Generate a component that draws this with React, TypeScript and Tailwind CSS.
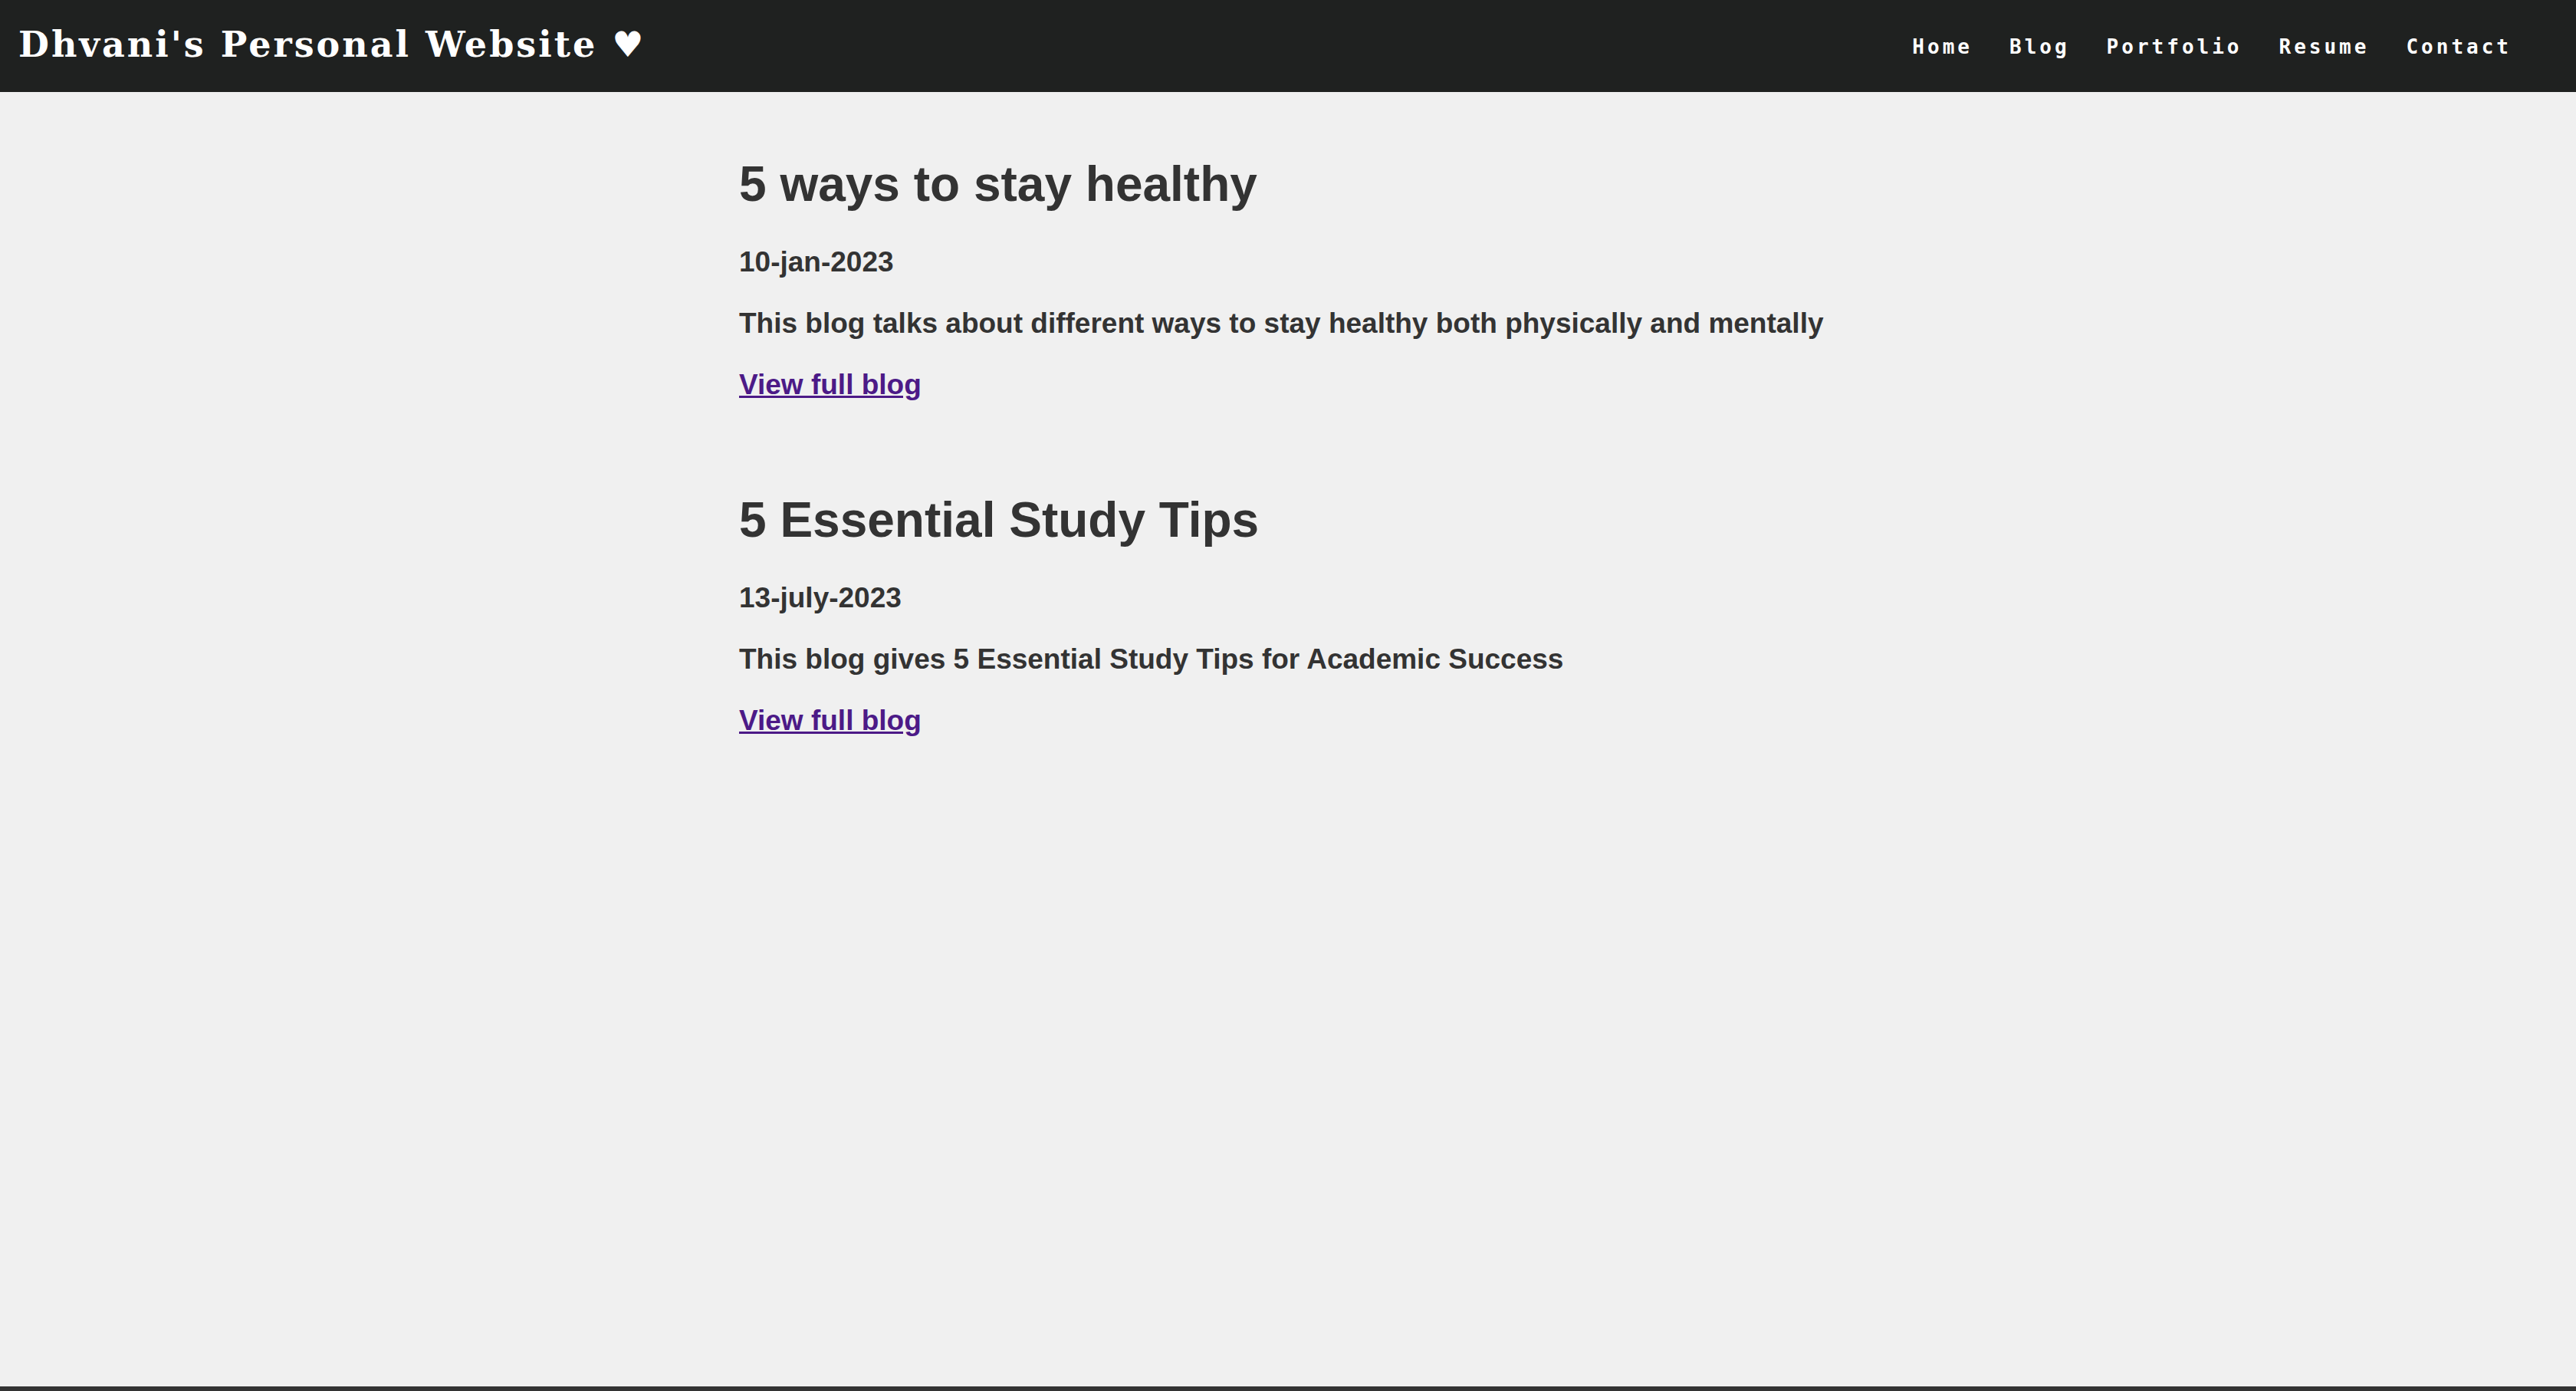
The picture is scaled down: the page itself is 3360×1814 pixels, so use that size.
const links = ["Home", "Blog", "Portfolio", "Resume", "Contact"];

const posts = [
  {
    title: "5 ways to stay healthy",
    date: "10-jan-2023",
    summary: "This blog talks about different ways to stay healthy both physically and mentally",
  },
  {
    title: "5 Essential Study Tips",
    date: "13-july-2023",
    summary: "This blog gives 5 Essential Study Tips for Academic Success",
  },
];

function Header() {
  return (
    <header className="flex h-30 items-center justify-between bg-[#1f2120] pl-6 pr-[84px] text-white">
      <div className="pb-1 font-['DejaVu_Serif',serif] text-[46px] leading-[60px] font-bold tracking-[3px]">
        Dhvani's Personal Website <span className="font-['DejaVu_Sans',sans-serif]">♥</span>
      </div>
      <nav className="flex gap-12 pt-0.5 font-['DejaVu_Sans_Mono',monospace] text-[26px] leading-8 font-bold tracking-[4px]">
        {links.map((label) => (
          <a key={label} href="#">
            {label}
          </a>
        ))}
      </nav>
    </header>
  );
}

export default function App() {
  return (
    <div className="flex min-h-screen flex-col bg-[#f0f0f0] font-['Liberation_Sans',Arial,sans-serif] font-bold text-[#333]">
      <Header />
      <main className="mx-auto flex w-full max-w-[1432px] grow flex-col gap-[118px] pt-[83px]">
        {posts.map((post) => (
          <article key={post.title}>
            <h1 className="mb-[43px] text-[64px] leading-[74px]">{post.title}</h1>
            <div className="flex flex-col items-start gap-[37px] text-[37px] leading-[43px]">
              <h3>{post.date}</h3>
              <h3>{post.summary}</h3>
              <a href="#" className="text-[#4c1a87] underline">
                View full blog
              </a>
            </div>
          </article>
        ))}
      </main>
      <footer className="h-1.5 bg-[#333]" />
    </div>
  );
}
